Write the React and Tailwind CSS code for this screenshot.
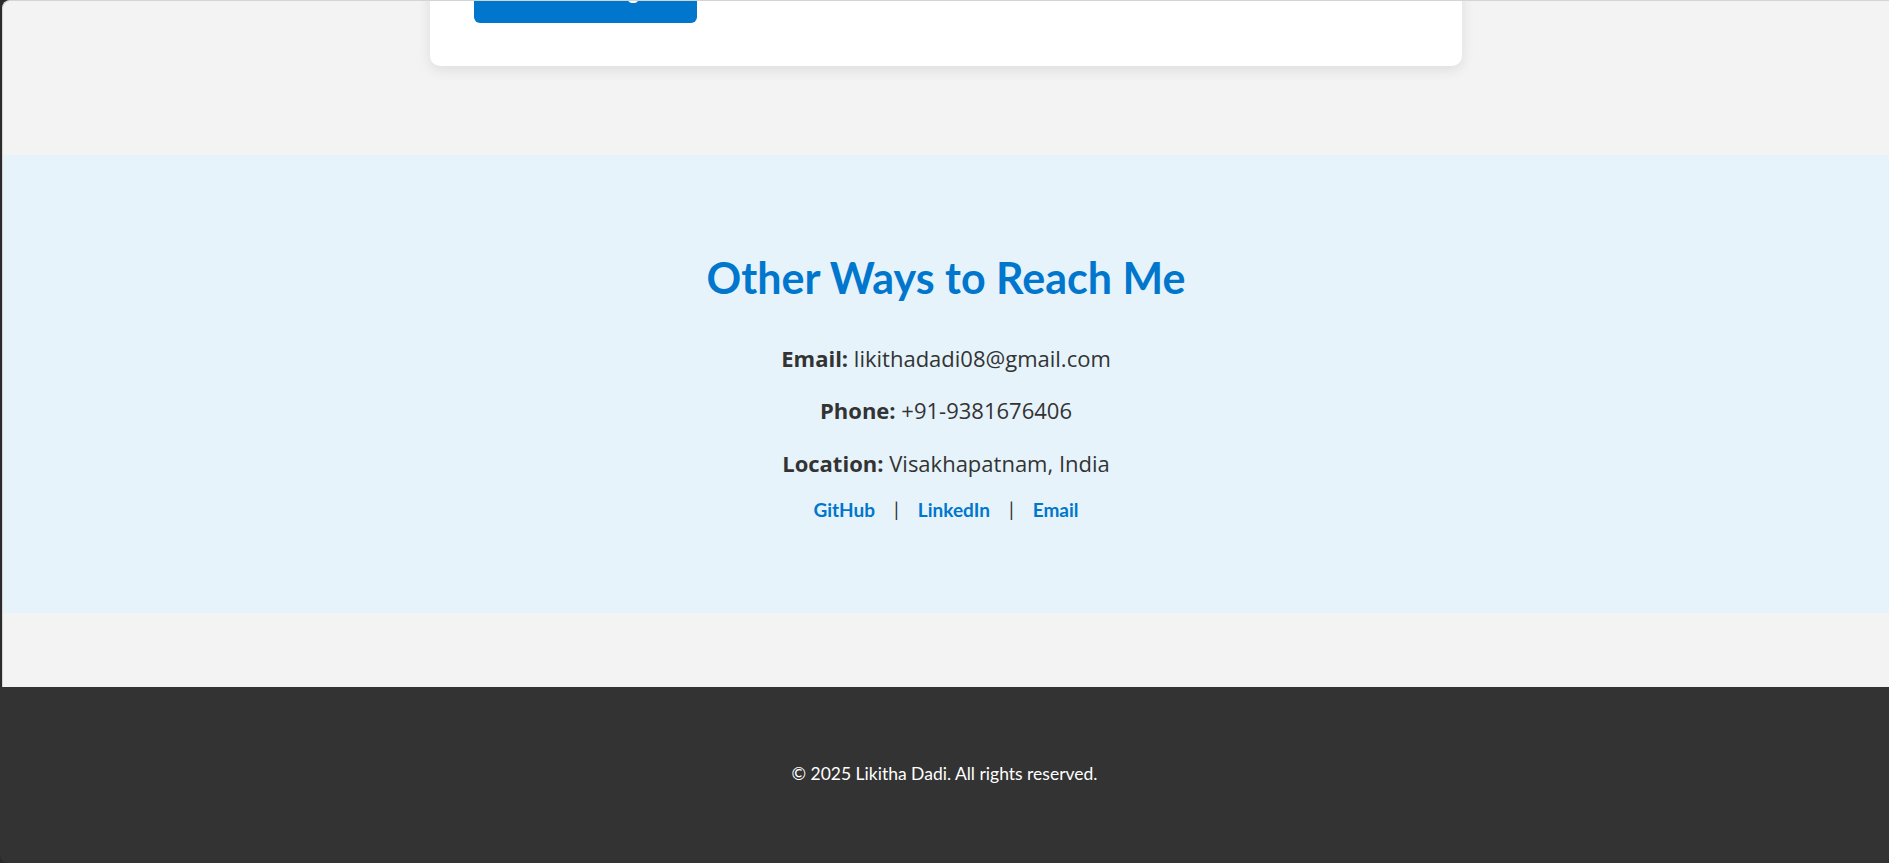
const links = [
  { label: "GitHub", href: "#" },
  { label: "LinkedIn", href: "#" },
  { label: "Email", href: "#" },
];

const details = [
  { label: "Email:", value: "likithadadi08@gmail.com" },
  { label: "Phone:", value: "+91-9381676406" },
  { label: "Location:", value: "Visakhapatnam, India" },
];

const App = () => {
  return (
    <div className="h-[863px] overflow-hidden bg-[#2b2b2b] font-['Lato','Liberation_Sans',sans-serif]">
      <div className="flex h-full flex-col overflow-hidden rounded-l-[8px]">
        {/* page body, framed on the left like the browser window */}
        <div className="border-l-2 border-[#2b2b2b]">
          <div className="overflow-hidden rounded-tl-[8px] border-l border-t border-[#d4d4d4] bg-[#f3f3f3]">
            {/* bottom of the contact form card */}
            <section className="px-[20px] pb-[89px]">
              <div className="mx-auto -mt-[34px] w-[1032px] rounded-b-[10px] bg-white px-[44px] pb-[43px] shadow-[0_4px_14px_rgba(0,0,0,0.09)]">
                <button className="flex h-[56px] w-[223px] items-center justify-center rounded-[6px] bg-[#0077cc] pb-[8px] text-[20px] font-bold text-white">
                  Send Message
                </button>
              </div>
            </section>

            {/* other ways to reach */}
            <section className="h-[458px] bg-[#e6f3fb] pt-[97px] text-center">
              <h2 className="text-[43px] font-bold leading-[1.2] text-[#0077cc]">
                Other Ways to Reach Me
              </h2>
              <div className="mt-[37px] font-['Open_Sans','Lato',sans-serif]">
                {details.map((d, i) => (
                  <p
                    key={d.label}
                    className={`text-[22px] leading-[35px] text-[#333] ${i > 0 ? "mt-[17.5px]" : ""}`}
                  >
                    <strong className="font-bold">{d.label}</strong> {d.value}
                  </p>
                ))}
              </div>
              <div className="mt-[17px] flex items-center justify-center gap-[19px] text-[19px] leading-[24px]">
                {links.map((l, i) => (
                  <div key={l.label} className="flex items-center gap-[19px]">
                    {i > 0 && <span className="text-[#333]">|</span>}
                    <a href={l.href} className="font-bold text-[#0077cc]">
                      {l.label}
                    </a>
                  </div>
                ))}
              </div>
            </section>

            <div className="h-[74px]" />
          </div>
        </div>

        <footer className="flex flex-1 items-center justify-center bg-[#333] pb-[1px]">
          <p className="text-[17.5px] text-white">© 2025 Likitha Dadi. All rights reserved.</p>
        </footer>
      </div>
    </div>
  );
};

export default App;
